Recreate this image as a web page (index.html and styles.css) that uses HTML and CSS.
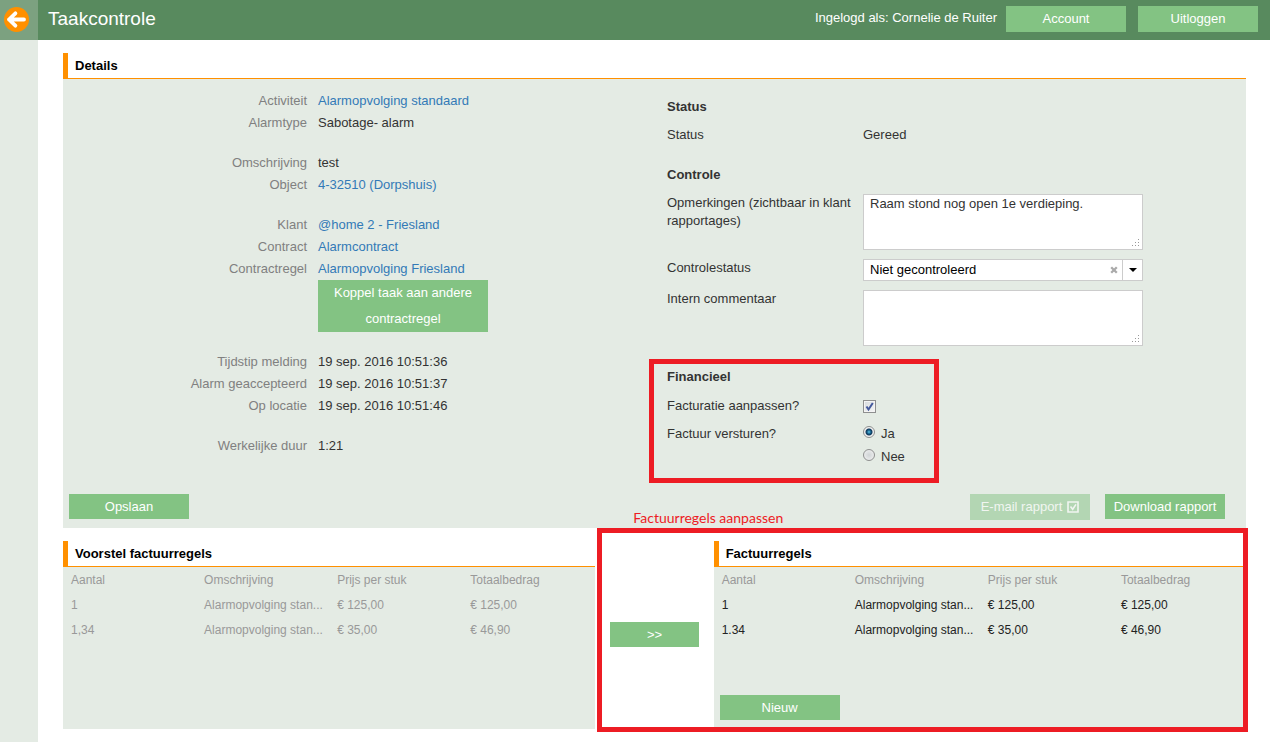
FILE: index.html
```html
<!DOCTYPE html>
<html lang="nl">
<head>
<meta charset="utf-8">
<title>Taakcontrole</title>
<link rel="stylesheet" href="styles.css">
</head>
<body>
<aside class="sidebar">
  <div class="sidebar-top">
    <button class="back" type="button" aria-label="Terug">
      <svg width="26" height="26" viewBox="0 0 26 26" aria-hidden="true">
        <circle cx="13.5" cy="13.5" r="12.5" fill="#ff9000"/>
        <path d="M6 13.5H21M12.4 7.3L6 13.5l6.4 6.2" fill="none" stroke="#fff" stroke-width="3.8" stroke-linecap="round" stroke-linejoin="round"/>
      </svg>
    </button>
  </div>
</aside>
<div class="page">
  <header class="topbar">
    <h1 class="title">Taakcontrole</h1>
    <span class="user">Ingelogd als: Cornelie de Ruiter</span>
    <div class="top-actions">
      <button class="btn btn-tall" type="button">Account</button>
      <button class="btn btn-tall" type="button">Uitloggen</button>
    </div>
  </header>
  <main class="content">
    <section>
      <h2 class="heading">Details</h2>
      <div class="panel">
        <div class="columns">
          <div class="facts">
            <dl class="group">
              <dt>Activiteit</dt><dd><a href="#">Alarmopvolging standaard</a></dd>
              <dt>Alarmtype</dt><dd>Sabotage- alarm</dd>
            </dl>
            <dl class="group">
              <dt>Omschrijving</dt><dd>test</dd>
              <dt>Object</dt><dd><a href="#">4-32510 (Dorpshuis)</a></dd>
            </dl>
            <dl class="group">
              <dt>Klant</dt><dd><a href="#">@home 2 - Friesland</a></dd>
              <dt>Contract</dt><dd><a href="#">Alarmcontract</a></dd>
              <dt>Contractregel</dt><dd><a href="#">Alarmopvolging Friesland</a>
                <button class="btn btn-link" type="button">Koppel taak aan andere contractregel</button></dd>
            </dl>
            <dl class="group">
              <dt>Tijdstip melding</dt><dd>19 sep. 2016 10:51:36</dd>
              <dt>Alarm geaccepteerd</dt><dd>19 sep. 2016 10:51:37</dd>
              <dt>Op locatie</dt><dd>19 sep. 2016 10:51:46</dd>
            </dl>
            <dl class="group">
              <dt>Werkelijke duur</dt><dd>1:21</dd>
            </dl>
          </div>
          <form class="review">
            <section class="block">
              <h3 class="subheading">Status</h3>
              <div class="field"><span>Status</span><span>Gereed</span></div>
            </section>
            <section class="block">
              <h3 class="subheading">Controle</h3>
              <div class="field">
                <label for="remarks">Opmerkingen (zichtbaar in klant rapportages)</label>
                <div class="control">
                  <textarea class="area" id="remarks">Raam stond nog open 1e verdieping.</textarea>
                  <svg class="grip" width="8" height="8" viewBox="0 0 8 8" aria-hidden="true"><path fill="#999" d="M6 0h1v1H6zM3 3h1v1H3zM6 3h1v1H6zM0 6h1v1H0zM3 6h1v1H3zM6 6h1v1H6z"/></svg>
                </div>
              </div>
              <div class="field">
                <label for="state">Controlestatus</label>
                <div class="control">
                  <select class="select" id="state"><option>Niet gecontroleerd</option></select>
                  <button class="clear" type="button" aria-label="Wissen">
                    <svg width="8" height="8" viewBox="0 0 8 8" aria-hidden="true"><path d="M1.2 1.2l5.6 5.6M6.8 1.2L1.2 6.8" stroke="#aaa" stroke-width="2.3"/></svg>
                  </button>
                  <span class="drop"><svg width="8" height="4" viewBox="0 0 8 4" aria-hidden="true"><path d="M0 0h8L4 4z"/></svg></span>
                </div>
              </div>
              <div class="field">
                <label for="internal">Intern commentaar</label>
                <div class="control">
                  <textarea class="area" id="internal"></textarea>
                  <svg class="grip" width="8" height="8" viewBox="0 0 8 8" aria-hidden="true"><path fill="#999" d="M6 0h1v1H6zM3 3h1v1H3zM6 3h1v1H6zM0 6h1v1H0zM3 6h1v1H3zM6 6h1v1H6z"/></svg>
                </div>
              </div>
            </section>
            <section class="block marked">
              <h3 class="subheading">Financieel</h3>
              <div class="field">
                <label for="adjust">Facturatie aanpassen?</label>
                <span class="option"><span class="tick">
                  <input class="check" id="adjust" type="checkbox" checked>
                  <svg class="tick-mark" width="13" height="13" viewBox="0 0 13 13" aria-hidden="true"><path d="M3.5 6.5l2 3L9.8 3" fill="none" stroke="#44599c" stroke-width="2"/></svg>
                </span></span>
              </div>
              <div class="field" role="radiogroup" aria-labelledby="send">
                <span id="send">Factuur versturen?</span>
                <div class="options">
                  <label class="option"><input class="radio" type="radio" name="send" checked>Ja</label>
                  <label class="option"><input class="radio" type="radio" name="send">Nee</label>
                </div>
              </div>
            </section>
          </form>
        </div>
        <div class="actions">
          <button class="btn" type="button">Opslaan</button>
          <div class="reports">
            <button class="btn btn-tall" type="button" disabled>E-mail rapport
              <svg width="12" height="12" viewBox="0 0 12 12" aria-hidden="true"><path d="M1 1h10v10H1zM3.5 5.5l2.2 2.8L9 3.4" fill="none" stroke="#fff" stroke-width="1.6"/></svg>
            </button>
            <button class="btn" type="button">Download rapport</button>
          </div>
        </div>
      </div>
    </section>
    <div class="invoices">
      <section class="card">
        <h2 class="heading">Voorstel factuurregels</h2>
        <div class="panel panel-list">
          <table class="lines muted">
            <thead><tr><th>Aantal</th><th>Omschrijving</th><th>Prijs per stuk</th><th>Totaalbedrag</th></tr></thead>
            <tbody>
              <tr><td>1</td><td>Alarmopvolging stan...</td><td>€ 125,00</td><td>€ 125,00</td></tr>
              <tr><td>1,34</td><td>Alarmopvolging stan...</td><td>€ 35,00</td><td>€ 46,90</td></tr>
            </tbody>
          </table>
        </div>
      </section>
      <div class="editing">
        <p class="note">Factuurregels aanpassen</p>
        <div class="transfer"><button class="btn btn-fill" type="button">&gt;&gt;</button></div>
        <section class="card">
          <h2 class="heading">Factuurregels</h2>
          <div class="panel panel-list">
            <table class="lines">
              <thead><tr><th>Aantal</th><th>Omschrijving</th><th>Prijs per stuk</th><th>Totaalbedrag</th></tr></thead>
              <tbody>
                <tr><td>1</td><td>Alarmopvolging stan...</td><td>€ 125,00</td><td>€ 125,00</td></tr>
                <tr><td>1.34</td><td>Alarmopvolging stan...</td><td>€ 35,00</td><td>€ 46,90</td></tr>
              </tbody>
            </table>
            <div class="list-actions"><button class="btn" type="button">Nieuw</button></div>
          </div>
        </section>
      </div>
    </div>
  </main>
</div>
</body>
</html>
```

FILE: styles.css
```css
*, *::after { box-sizing: border-box; }

body {
  margin: 0;
  min-height: 100vh;
  display: grid;
  grid-template-columns: 38px minmax(0, 1fr);
  font: 13px/18px "Liberation Sans", Arial, sans-serif;
  color: #333;
  background: #fff;
}

button, select, textarea, input { font: inherit; color: inherit; margin: 0; }
h1, h2, h3, p, dl, dd { margin: 0; }
svg { display: block; }
a { color: #337ab7; text-decoration: none; }

/* frame */
.sidebar { background: #e4ebe4; }
.sidebar-top { height: 40px; padding: 6px 3px; background: #7ca180; }
.back { display: block; padding: 0; border: 0; background: none; }

.topbar {
  height: 40px;
  display: flex;
  align-items: flex-start;
  padding: 6px 12px 0 10px;
  background: #588a5e;
  color: #fff;
}
.title { flex: 1; font-size: 19px; line-height: 26px; font-weight: normal; }
.user { line-height: 24px; margin-right: 9px; }
.top-actions { display: flex; gap: 12px; }

.content { padding: 13px 24px 13px 25px; }

/* shared parts */
.btn {
  width: 120px;
  min-height: 25px;
  padding: 0;
  border: 0;
  background: #83c383;
  color: #fff;
  line-height: 25px;
  text-align: center;
}
.btn-tall { min-height: 26px; line-height: 26px; }
.btn-fill { width: 100%; }
.btn-link {
  display: block;
  width: 170px;
  min-height: 51px;
  margin-bottom: 1px;
  padding: 0 12px;
  line-height: 26px;
}
.btn:disabled { display: flex; align-items: center; justify-content: center; gap: 5px; opacity: 0.5; }

.heading {
  flex: none;
  height: 26px;
  padding-left: 7px;
  border-left: 5px solid #ff9000;
  border-bottom: 1px solid #ff9000;
  font-size: 13px;
  line-height: 25px;
  color: #000;
}
.panel { background: #e4ebe4; }

/* details */
.columns { display: grid; grid-template-columns: 1fr 1fr; column-gap: 25px; }
.facts { display: flex; flex-direction: column; gap: 18px; padding-top: 11px; }
.group {
  display: grid;
  grid-template-columns: 244px 1fr;
  column-gap: 11px;
  line-height: 22px;
}
.group dt { text-align: right; color: #808080; }

.review { display: flex; flex-direction: column; gap: 22px; padding-top: 19px; }
.block { display: flex; flex-direction: column; gap: 9px; position: relative; }
.subheading { font-size: 13px; line-height: 18px; margin-bottom: 1px; }
.field { display: grid; grid-template-columns: 186px 280px; column-gap: 10px; }
.control { position: relative; display: flex; }
.area {
  width: 100%;
  height: 56px;
  padding: 0 6px;
  border: 1px solid #ccc;
  background: #fff;
  resize: none;
}
.grip { position: absolute; right: 3px; bottom: 3px; }
.select {
  appearance: none;
  width: 100%;
  height: 22px;
  padding: 0 48px 0 6px;
  border: 1px solid #ccc;
  border-radius: 0;
  background: #fff;
  color: #000;
}
.clear { position: absolute; right: 25px; top: 7px; padding: 0; border: 0; background: none; }
.drop {
  position: absolute;
  right: 0;
  top: 0;
  width: 21px;
  height: 22px;
  display: grid;
  place-items: center;
  border-left: 1px solid #ccc;
  pointer-events: none;
}

.marked { gap: 10px; }
.options { display: flex; flex-direction: column; gap: 5px; }
.option { display: flex; align-items: center; gap: 6px; }
.tick { position: relative; display: flex; }
.check {
  appearance: none;
  width: 13px;
  height: 13px;
  border: 1px solid #8e8f8f;
  background: linear-gradient(135deg, #d5dade, #f6f6f6);
  box-shadow: inset 0 0 0 1px #f4f4f4;
}
.tick-mark { position: absolute; inset: 0; pointer-events: none; }
.radio {
  appearance: none;
  width: 12px;
  height: 12px;
  margin-bottom: 4px;
  border: 1px solid #8e8f8f;
  border-radius: 50%;
  background: radial-gradient(circle, #d0d4d6, #f4f4f4);
}
.radio:checked { background: radial-gradient(circle at 50% 50%, #5cc8ee 0, #12567f 2px, #123a5c 3px, #f0f0f0 4px); }

/* red highlight frames */
.marked::after, .editing::after {
  content: "";
  position: absolute;
  border: 5px solid #ed1c24;
  pointer-events: none;
}
.marked::after { top: -9px; left: -18px; width: 290px; height: 124px; }
.editing::after { inset: -13px -2px -3px 2px; }
.note {
  position: absolute;
  left: 38px;
  top: -32px;
  font-family: Lato, sans-serif;
  font-size: 14px;
  color: #ed1c24;
}

.actions {
  display: flex;
  justify-content: space-between;
  align-items: flex-start;
  padding: 28px 21px 8px 6px;
}
.reports { display: flex; align-items: flex-start; gap: 15px; }

/* invoice lines */
.invoices { display: grid; grid-template-columns: 45fr 55fr; margin-top: 13px; }
.editing { position: relative; display: grid; grid-template-columns: 10fr 45fr; }
.transfer { padding: 81px 15px 0; }
.card { display: flex; flex-direction: column; }
.panel-list { flex: 1; min-height: 162px; display: flex; flex-direction: column; }
.list-actions { margin-top: auto; padding: 0 6px 9px; }
.lines { width: 100%; table-layout: fixed; border-collapse: collapse; font-size: 12px; color: #222; }
.lines th, .lines td {
  height: 25px;
  padding: 0 1px 0 8px;
  line-height: 18px;
  text-align: left;
  white-space: nowrap;
}
.lines th { font-weight: normal; color: #999; }
.lines.muted { color: #999; }
```
